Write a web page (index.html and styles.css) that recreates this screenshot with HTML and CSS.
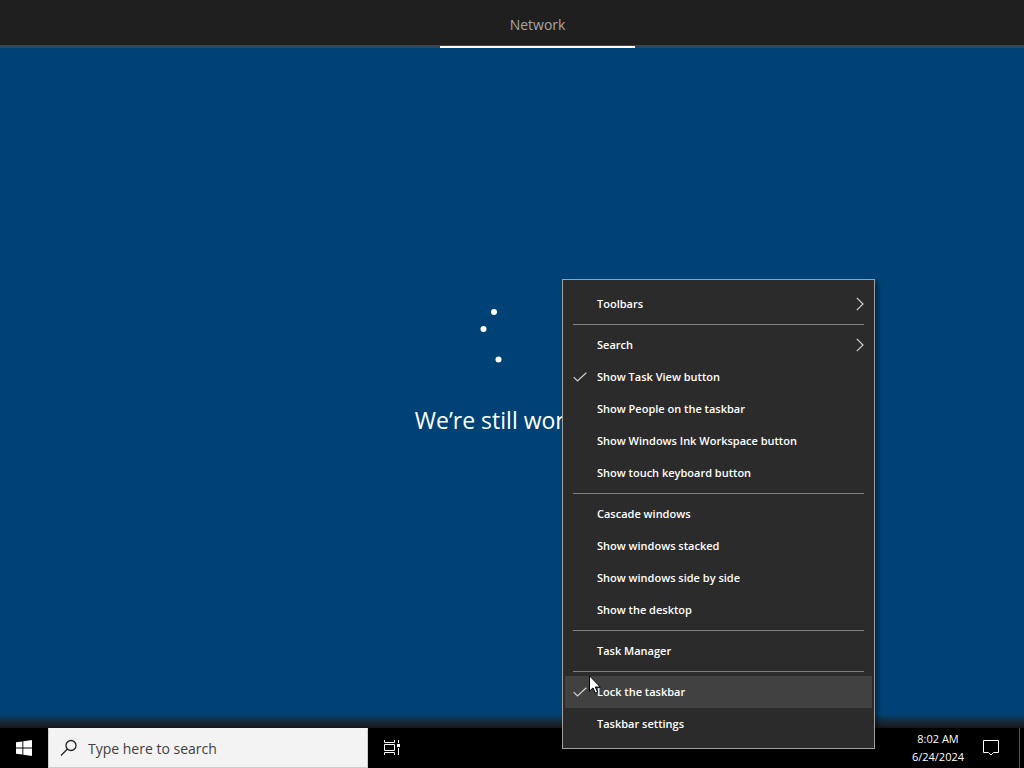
FILE: index.html
```
<!DOCTYPE html>
<html lang="en">
<head>
<meta charset="utf-8">
<title>Network</title>
<link rel="stylesheet" href="styles.css">
</head>
<body>

<header class="topbar">
  <a class="tab" href="#network">Network</a>
</header>

<main class="desktop" id="network">
  <svg class="spinner" viewBox="0 0 64 64" aria-hidden="true">
    <circle cx="14" cy="8" r="3"/>
    <circle cx="3.5" cy="25" r="3"/>
    <circle cx="18.5" cy="55.5" r="3"/>
  </svg>
  <h1 class="status">We’re still working</h1>
</main>

<footer class="taskbar">
  <button class="start" type="button" aria-label="Start">
    <svg width="16" height="16" viewBox="0 0 16 16">
      <path d="M0 2.3 6.4 1.4V7.5H0zM7.3 1.2 16 0V7.5H7.3zM0 8.4H6.4V14.6L0 13.7zM7.3 8.4H16V16L7.3 14.8z"/>
    </svg>
  </button>
  <label class="search">
    <svg width="18" height="18" viewBox="0 0 18 18">
      <circle cx="11" cy="6.5" r="5"/>
      <path d="M7.500 10 1 16.5"/>
    </svg>
    <input type="text" placeholder="Type here to search" aria-label="Search">
  </label>
  <button class="taskview" type="button" aria-label="Task View">
    <svg width="16" height="16" viewBox="0 0 16 16">
      <path d="M.5 0V2.500H10.500V0M.5 4.500H10.500V10.500H.5zM.5 15V12.500H10.500V15M14.500 0V3M14.500 8V15"/>
      <rect x="13" y="4" width="3" height="3"/>
    </svg>
  </button>
  <div class="clock"><time>8:02 AM</time><time>6/24/2024</time></div>
  <button class="actions" type="button" aria-label="Notifications">
    <svg width="16" height="16" viewBox="0 0 16 16">
      <path d="M.5 .5H15.500V12.500H10.500L8 15 5.500 12.500H.5z"/>
    </svg>
  </button>
  <button class="peek" type="button" aria-label="Show desktop"></button>
</footer>

<div class="menu" role="menu">
  <button class="item" type="button" role="menuitem">Toolbars
    <svg class="arrow" width="8" height="14" viewBox="0 0 8 14"><path d="M.8 .8 7 7 .8 13.2"/></svg>
  </button>
  <hr>
  <button class="item" type="button" role="menuitem">Search
    <svg class="arrow" width="8" height="14" viewBox="0 0 8 14"><path d="M.8 .8 7 7 .8 13.2"/></svg>
  </button>
  <button class="item checked" type="button" role="menuitemcheckbox" aria-checked="true">
    <svg class="check" width="14" height="10" viewBox="0 0 14 10"><path d="M.7 5.200 4.500 9 13.300 .7"/></svg>Show Task View button
  </button>
  <button class="item" type="button" role="menuitem">Show People on the taskbar</button>
  <button class="item" type="button" role="menuitem">Show Windows Ink Workspace button</button>
  <button class="item" type="button" role="menuitem">Show touch keyboard button</button>
  <hr>
  <button class="item" type="button" role="menuitem">Cascade windows</button>
  <button class="item" type="button" role="menuitem">Show windows stacked</button>
  <button class="item" type="button" role="menuitem">Show windows side by side</button>
  <button class="item" type="button" role="menuitem">Show the desktop</button>
  <hr>
  <button class="item" type="button" role="menuitem">Task Manager</button>
  <hr>
  <button class="item checked active" type="button" role="menuitemcheckbox" aria-checked="true">
    <svg class="check" width="14" height="10" viewBox="0 0 14 10"><path d="M.7 5.200 4.500 9 13.300 .7"/></svg>Lock the taskbar
  </button>
  <button class="item" type="button" role="menuitem">Taskbar settings</button>
  <svg class="cursor" width="12" height="19" viewBox="0 0 12 19" aria-hidden="true">
    <path d="M.5 .8V16.300L4 12.900 6.300 18.200 8.600 17.200 6.300 12H11.300z"/>
  </svg>
</div>

</body>
</html>
```
FILE: styles.css
```
* {
  box-sizing: border-box;
}

body {
  margin: 0;
  min-height: 100vh;
  display: flex;
  flex-direction: column;
  position: relative;
  overflow: hidden;
  background: #004275;
  color: #fff;
  font-family: "Open Sans", "Noto Sans", sans-serif;
  font-size: 11px;
  font-weight: 500;
}

button {
  margin: 0;
  padding: 0;
  border: 0;
  background: none;
  color: inherit;
  font: inherit;
}

.topbar {
  display: grid;
  grid-template-columns: 43% 19% 1fr;
  height: 48px;
  background: linear-gradient(#1f1f1f 45px, #3a444c 45px, #214a6c);
}

.tab {
  grid-column: 2;
  height: 48px;
  padding-top: 2px;
  border-bottom: 2px solid #fff;
  color: #a6a6a6;
  font-size: 14px;
  line-height: 46px;
  text-align: center;
  text-decoration: none;
}

.desktop {
  flex: 1;
  display: flex;
  flex-direction: column;
  align-items: center;
  justify-content: center;
  gap: 36px;
  padding-bottom: 36px;
  background: linear-gradient(to top, #141618, #1b2229 4px, #004275 14px);
}

.spinner {
  width: 64px;
  height: 64px;
  fill: #fff;
}

.status {
  margin: 0;
  font-size: 23px;
  font-weight: 400;
  line-height: 32px;
}

.taskbar {
  display: flex;
  height: 40px;
  background: #000;
}

.start {
  width: 48px;
  display: grid;
  place-items: center;
}

.start svg {
  fill: #fff;
}

.search {
  flex: 0 1 320px;
  display: flex;
  align-items: center;
  gap: 10px;
  padding-left: 11px;
  background: #f3f3f3;
  border: 1px solid #ccc;
  border-top-color: #f3f3f3;
}

.search svg {
  fill: none;
  stroke: #222;
  stroke-width: 1.3;
}

.search input {
  flex: 1;
  min-width: 0;
  padding: 0;
  border: 0;
  outline: 0;
  background: none;
  font: inherit;
  font-size: 14px;
  font-weight: 400;
}

.search input::placeholder {
  color: #404040;
}

.taskview {
  width: 48px;
  display: grid;
  place-items: center;
}

.taskview svg, .actions svg {
  fill: none;
  stroke: #fff;
}

.taskview rect {
  fill: #fff;
  stroke: none;
}

.clock {
  display: flex;
  flex-direction: column;
  justify-content: center;
  margin-left: auto;
  width: 66px;
  line-height: 18px;
  text-align: center;
}

.actions {
  width: 40px;
  display: grid;
  place-items: center;
}

.peek {
  width: 13px;
}

.peek::before {
  content: "";
  display: block;
  width: 1px;
  height: 40px;
  margin-left: 8px;
  background: #555;
}

.menu {
  position: absolute;
  right: 149px;
  bottom: 19px;
  width: 313px;
  padding: 8px 2px;
  background: #2b2b2b;
  border: 1px solid #a0a0a0;
  box-shadow: 3px 3px 4px rgba(0, 0, 0, 0.4);
  font-weight: 600;
}

.menu hr {
  height: 1px;
  margin: 4px 8px;
  border: 0;
  background: #808080;
}

.item {
  display: flex;
  align-items: center;
  width: 100%;
  height: 32px;
  padding: 0 8px 1px 32px;
  text-align: left;
}

.item.checked {
  gap: 10px;
  padding-left: 8px;
}

.item.active {
  background: #414141;
}

.arrow {
  margin-left: auto;
}

.arrow, .check {
  fill: none;
  stroke: #d0d0d0;
  stroke-width: 1.2;
}

/* mouse pointer resting on the active row */
.cursor {
  position: absolute;
  left: 26px;
  bottom: 54px;
  fill: #fff;
  stroke: #000;
}
```
